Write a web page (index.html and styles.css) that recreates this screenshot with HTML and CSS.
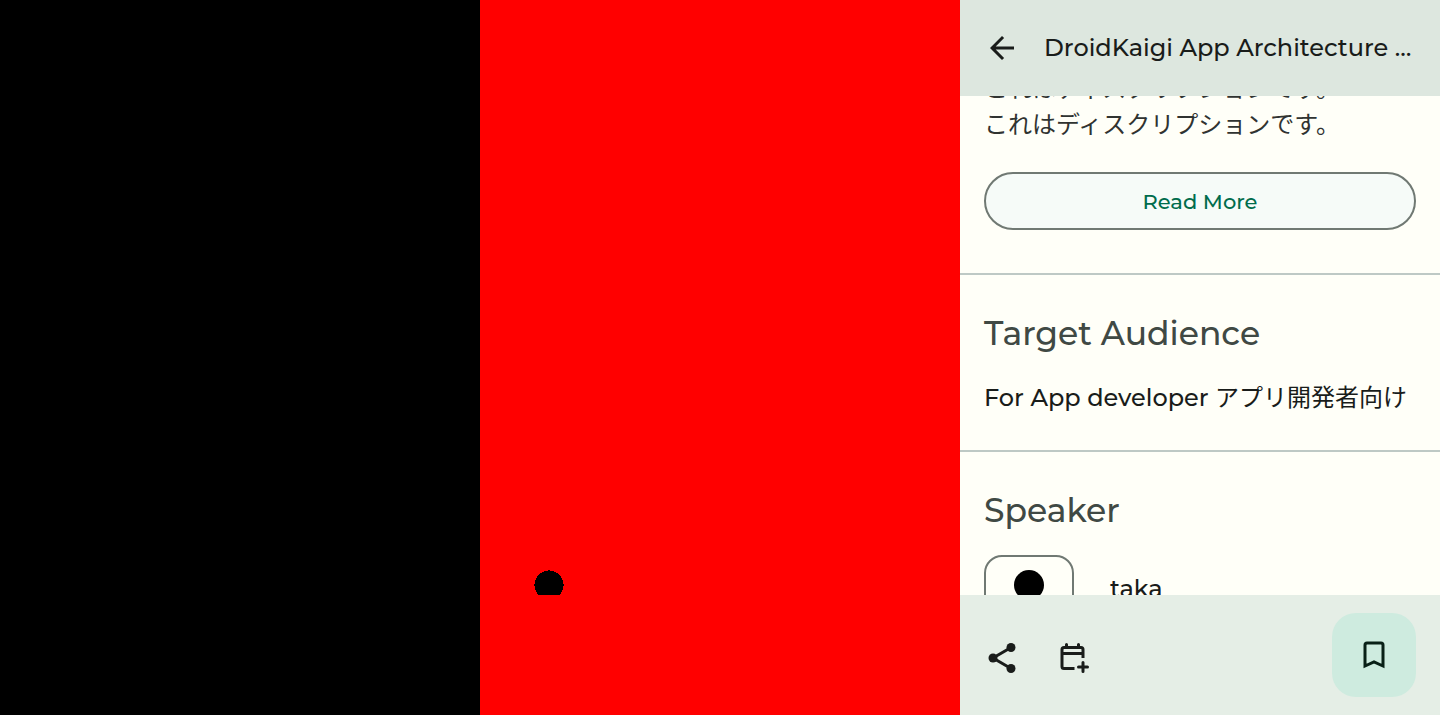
FILE: index.html
```html
<!DOCTYPE html>
<html lang="en">
<head>
<meta charset="utf-8">
<title>Session detail comparison</title>
<link rel="stylesheet" href="styles.css">
</head>
<body>
<div class="compare">
  <section class="panel panel-before" aria-label="Before"></section>
  <section class="panel panel-diff" aria-label="Difference">
    <div class="diff-view">
      <svg class="diff-dot" viewBox="0 0 30 30" shape-rendering="crispEdges" aria-hidden="true"><circle cx="15" cy="15" r="14.5"/><path d="M14 0h2v2h-2zM0 14h2v2H0zM28 14h2v2h-2z"/></svg>
    </div>
  </section>
  <section class="panel panel-after" aria-label="After">
    <header class="top-bar">
      <button class="icon-button" type="button" aria-label="Back">
        <svg class="icon" viewBox="0 0 24 24" fill="currentColor" aria-hidden="true"><path d="M20 11H7.8l5.6-5.6L12 4l-8 8 8 8 1.4-1.4L7.8 13H20z"/></svg>
      </button>
      <h1 class="title">DroidKaigi App Architecture …</h1>
    </header>
    <main class="content">
      <section class="section section-description">
        <p class="description" lang="ja">これはディスクリプションです。<br>これはディスクリプションです。</p>
        <button class="read-more" type="button">Read More</button>
      </section>
      <section class="section">
        <h2 class="heading">Target Audience</h2>
        <p class="body-text">For App developer <span lang="ja">アプリ開発者向け</span></p>
      </section>
      <section class="section">
        <h2 class="heading">Speaker</h2>
        <div class="speaker">
          <div class="avatar">
            <svg class="avatar-icon" viewBox="0 0 60 60" aria-hidden="true"><circle cx="30" cy="15" r="15"/><path d="M0 60v-8c0-10 20-15 30-15s30 5 30 15v8z"/></svg>
          </div>
          <p class="speaker-name">taka</p>
        </div>
      </section>
    </main>
    <footer class="bottom-bar">
      <button class="icon-button" type="button" aria-label="Share">
        <svg class="icon" viewBox="0 0 36 36" fill="currentColor" aria-hidden="true"><path d="M27 7.500 9 18l18 10.500" fill="none" stroke="currentColor" stroke-width="3"/><circle cx="27" cy="7.500" r="4.500"/><circle cx="9" cy="18" r="4.500"/><circle cx="27" cy="28.500" r="4.500"/></svg>
      </button>
      <button class="icon-button" type="button" aria-label="Add to calendar">
        <svg class="icon" viewBox="0 0 36 36" fill="none" stroke="currentColor" stroke-width="3" stroke-linecap="round" aria-hidden="true"><path stroke-linecap="butt" d="M18.500 28.500H8Q6 28.500 6 26.500V9.500Q6 7.500 8 7.500H25Q27 7.500 27 9.500V18M6 13.500H27"/><path d="M10.500 4.500V7M22.500 4.500V7M27 22.500V31.500M22.500 27H31.500"/></svg>
      </button>
      <button class="bookmark" type="button" aria-label="Bookmark">
        <svg class="icon" viewBox="0 0 36 36" fill="none" stroke="currentColor" stroke-width="3" aria-hidden="true"><path d="M9 29V8q0-2 2-2h14q2 0 2 2v21l-9-4z"/></svg>
      </button>
    </footer>
  </section>
</div>
</body>
</html>
```
FILE: styles.css
```css
* {
  box-sizing: border-box;
}

body {
  margin: 0;
  font-family: Montserrat, Inter, "Noto Sans CJK JP", sans-serif;
  font-weight: 500;
  color: #191c1a;
}

h1, h2, p {
  margin: 0;
  font-weight: 500;
}

button {
  font: inherit;
  color: inherit;
  border: 0;
  padding: 0;
  background: none;
  cursor: pointer;
}

.compare {
  display: grid;
  grid-template-columns: repeat(3, minmax(0, 1fr));
  height: 100vh;
}

.panel {
  display: flex;
  flex-direction: column;
  min-height: 0;
}

.panel-before {
  background: #000;
}

.panel-diff {
  background: #f00;
  padding-bottom: 120px;
}

.diff-view {
  flex: 1;
  min-height: 0;
  overflow: hidden;
  padding: 570px 54px 0;
}

.diff-dot {
  display: block;
  width: 30px;
  height: 30px;
}

.panel-after {
  background: #fffff8;
}

.top-bar {
  display: flex;
  align-items: center;
  gap: 24px;
  flex: none;
  height: 96px;
  padding: 0 20px 0 24px;
  background: #dde7df;
}

.icon-button {
  display: flex;
  flex: none;
}

.icon {
  display: block;
  width: 36px;
  height: 36px;
}

.title {
  flex: 1;
  font-size: 24px;
  line-height: 36px;
  white-space: nowrap;
}

.content {
  flex: 1;
  min-height: 0;
  overflow: hidden;
}

.section {
  padding: 34px 24px;
  border-bottom: 2px solid #bec9c5;
}

.section-description {
  margin-top: -27px;
  padding: 0 24px 43px;
}

.description {
  margin-bottom: 31px;
  font-family: "Noto Sans CJK JP", sans-serif;
  font-size: 24px;
  font-weight: 400;
  line-height: 36px;
  color: #303331;
}

.read-more {
  display: block;
  width: 100%;
  height: 58px;
  border: 2px solid #707973;
  border-radius: 29px;
  background: #f6fbf8;
  color: #006c4c;
  font-size: 21px;
}

.heading {
  margin-bottom: 21px;
  font-size: 33px;
  line-height: 48px;
  color: #404944;
}

.body-text {
  font-size: 24px;
  line-height: 36px;
  white-space: nowrap;
}

.body-text span {
  font-family: "Noto Sans CJK JP", sans-serif;
  font-weight: 400;
}

.speaker {
  display: flex;
  align-items: flex-start;
  gap: 36px;
}

.avatar {
  display: flex;
  justify-content: center;
  width: 90px;
  height: 90px;
  padding-top: 13px;
  border: 2px solid #707973;
  border-radius: 18px;
}

.avatar-icon {
  width: 60px;
  height: 60px;
}

.speaker-name {
  padding-top: 16px;
  font-size: 24px;
  line-height: 36px;
}

.bottom-bar {
  display: flex;
  align-items: center;
  gap: 36px;
  flex: none;
  height: 120px;
  padding: 0 24px;
  background: #e5eee6;
}

.bottom-bar .icon-button {
  padding-top: 6px;
}

.bookmark {
  display: flex;
  align-items: center;
  justify-content: center;
  width: 84px;
  height: 84px;
  margin-left: auto;
  border-radius: 24px;
  background: #ceebdf;
  color: #092017;
}
```
